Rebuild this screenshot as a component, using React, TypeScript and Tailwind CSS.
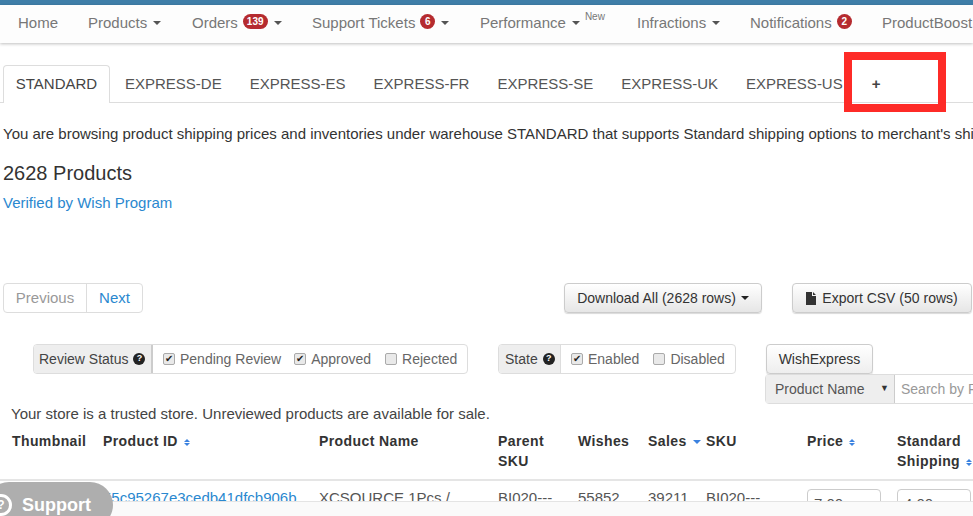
const Caret = ({ className = "ml-[6px] border-t-[#555]" }: { className?: string }) => (
  <span className={`inline-block h-0 w-0 border-x-[4px] border-t-[4px] border-x-transparent ${className}`} />
);

const Badge = ({ children }: { children: string }) => (
  <span className="ml-[5px] -mt-[4px] flex h-[15px] min-w-[15px] items-center justify-center rounded-full bg-[#b52b2f] px-[4px] text-[10px] font-bold text-white">
    {children}
  </span>
);

const Sort = () => (
  <span className="ml-[6px] inline-flex flex-col gap-[1px] align-middle">
    <span className="h-0 w-0 border-x-[3px] border-b-[3px] border-x-transparent border-b-[#3b82e0]" />
    <span className="h-0 w-0 border-x-[3px] border-t-[3px] border-x-transparent border-t-[#3b82e0]" />
  </span>
);

const Help = () => (
  <span className="ml-[5px] flex h-[12px] w-[12px] items-center justify-center rounded-full bg-[#222] text-[9px] font-bold text-white">?</span>
);

const Check = ({ label, checked, className = "" }: { label: string; checked?: boolean; className?: string }) => (
  <span className={`flex items-center ${className}`}>
    <span className="mr-[5px] flex h-[12px] w-[12px] items-center justify-center rounded-[2px] border border-[#aaa] bg-[#e9e9e9] text-[10px] leading-none text-[#222]">
      {checked ? "✔" : ""}
    </span>
    {label}
  </span>
);

const tabs = ["EXPRESS-DE", "EXPRESS-ES", "EXPRESS-FR", "EXPRESS-SE", "EXPRESS-UK", "EXPRESS-US"];

export default function App() {
  return (
    <div className="relative h-[516px] w-[973px] overflow-hidden bg-white font-['Liberation_Sans',Arial,sans-serif] text-[15px] text-[#444]">
      {/* Navbar */}
      <div className="h-[5px] bg-[#3f7ea8]" />
      <nav className="flex h-[38px] items-center overflow-hidden whitespace-nowrap bg-[#fdfdfd] pb-[2px] pl-[18px] text-[#777] shadow-[0_1px_3px_rgba(0,0,0,0.25)]">
        <span className="w-[70px]">Home</span>
        <span className="flex w-[104px] items-center">Products<Caret /></span>
        <span className="flex w-[120px] items-center">Orders<Badge>139</Badge><Caret /></span>
        <span className="flex w-[168px] items-center">Support Tickets<Badge>6</Badge><Caret /></span>
        <span className="flex w-[157px] items-center">Performance<Caret /><sup className="-mt-[3px] ml-[5px] text-[10px]">New</sup></span>
        <span className="flex w-[113px] items-center">Infractions<Caret /></span>
        <span className="flex w-[132px] items-center">Notifications<Badge>2</Badge></span>
        <span>ProductBoost</span>
      </nav>

      {/* Warehouse tabs */}
      <div className="mt-[22px] flex h-[38px] border-b border-[#ddd] pl-[3px] whitespace-nowrap">
        <span className="flex h-[38px] w-[107px] items-center justify-center rounded-t-[4px] border border-b-0 border-[#ddd] bg-white">STANDARD</span>
        <div className="flex gap-[28px] pl-[15px]">
          {tabs.map((t) => (
            <span key={t} className="flex h-[38px] items-center text-[#555]">{t}</span>
          ))}
          <span className="flex h-[38px] items-center pl-[1px] font-bold text-[#444]">+</span>
        </div>
      </div>

      <p className="mt-[21px] whitespace-nowrap pl-[3px] leading-[20px] text-[#333]">
        You are browsing product shipping prices and inventories under warehouse STANDARD that supports Standard shipping options to merchant's shipping countries
      </p>
      <h2 className="mt-[17px] pl-[3px] text-[20px] leading-[24px] text-[#333]">2628 Products</h2>
      <a className="mt-[8px] block pl-[3px] leading-[20px] text-[#2a88cf]">Verified by Wish Program</a>

      {/* Pager and exports */}
      <div className="mt-[70px] flex h-[30px] items-center whitespace-nowrap pl-[3px]">
        <div className="flex h-[30px] w-[140px] shrink-0 items-center rounded-[4px] border border-[#ddd]">
          <span className="flex h-full w-[83px] items-center justify-center border-r border-[#ddd] text-[#999]">Previous</span>
          <span className="flex flex-1 items-center justify-center text-[#2a88cf]">Next</span>
        </div>
        <button className="ml-[421px] flex h-[30px] w-[198px] shrink-0 items-center justify-center rounded-[4px] border border-[#ccc] bg-gradient-to-b from-white to-[#e6e6e6] text-[14px] text-[#333] shadow-[0_1px_1px_rgba(0,0,0,0.15)]">
          Download All (2628 rows)<Caret className="ml-[5px] border-t-[#222]" />
        </button>
        <button className="ml-[30px] flex h-[30px] w-[180px] shrink-0 items-center justify-center rounded-[4px] border border-[#ccc] bg-gradient-to-b from-white to-[#e6e6e6] text-[14px] text-[#333] shadow-[0_1px_1px_rgba(0,0,0,0.15)]">
          <svg width="11" height="13" viewBox="0 0 11 13" className="mr-[5px]"><path d="M0 0h6v4h4v9H0z M7 0l3 3H7z" fill="#333" /></svg>
          Export CSV (50 rows)
        </button>
      </div>

      {/* Filters */}
      <div className="mt-[31px] flex items-start whitespace-nowrap pl-[33px] text-[14px]">
        <div className="flex h-[30px] w-[435px] shrink-0 items-center rounded-[4px] border border-[#ddd]">
          <span className="flex h-full w-[119px] items-center rounded-l-[3px] border-r-2 border-[#ccc] bg-[#eee] pl-[5px] text-[#444]">Review Status<Help /></span>
          <Check label="Pending Review" checked className="ml-[10px] text-[#666]" />
          <Check label="Approved" checked className="ml-[13px] text-[#666]" />
          <Check label="Rejected" className="ml-[14px] text-[#666]" />
        </div>
        <div className="ml-[30px] flex h-[30px] w-[238px] shrink-0 items-center rounded-[4px] border border-[#ddd]">
          <span className="flex h-full w-[62px] items-center rounded-l-[3px] border-r border-[#ddd] bg-[#eee] pl-[6px] text-[#444]">State<Help /></span>
          <Check label="Enabled" checked className="ml-[10px] text-[#666]" />
          <Check label="Disabled" className="ml-[14px] text-[#666]" />
        </div>
        <div className="ml-[30px] flex shrink-0 flex-col items-start">
          <button className="flex h-[30px] w-[107px] items-center justify-center rounded-[4px] border border-[#ccc] bg-gradient-to-b from-white to-[#eee] text-[#333] shadow-[0_1px_1px_rgba(0,0,0,0.15)]">WishExpress</button>
          <div className="-ml-[1px] flex h-[30px] w-[300px] items-center rounded-[4px] border border-[#ddd]">
            <span className="flex h-full w-[129px] items-center justify-between border-r border-[#ccc] bg-[#eee] pl-[9px] pr-[5px] text-[#555]">Product Name<span className="text-[9px] text-[#333]">▼</span></span>
            <span className="pl-[6px] text-[#999]">Search by Product Name</span>
          </div>
        </div>
      </div>

      <p className="pl-[11px] leading-[20px] text-[#444]">Your store is a trusted store. Unreviewed products are available for sale.</p>

      {/* Product table */}
      <div className="mt-[7px] grid h-[50px] grid-cols-[91px_216px_179px_80px_70px_58px_101px_90px_1fr] border-b-2 border-[#e5e5e5] pl-[12px] text-[14px] font-bold leading-[20px] tracking-[0.4px] text-[#333]">
        <span>Thumbnail</span>
        <span className="whitespace-nowrap">Product ID<Sort /></span>
        <span>Product Name</span>
        <span>Parent<br />SKU</span>
        <span>Wishes</span>
        <span className="whitespace-nowrap">Sales<Caret className="ml-[6px] border-t-[#3b82e0] align-middle" /></span>
        <span>SKU</span>
        <span className="whitespace-nowrap">Price<Sort /></span>
        <span className="whitespace-nowrap">Standard<br />Shipping<Sort /></span>
      </div>
      <div className="grid grid-cols-[91px_216px_179px_80px_70px_58px_101px_90px_1fr] pl-[12px] pt-[7px] leading-[20px] whitespace-nowrap text-[#555]">
        <span />
        <span className="text-[#2a88cf]">55c95267e3cedb41dfcb906b</span>
        <span>XCSOURCE 1Pcs /</span>
        <span>BI020---</span>
        <span>55852</span>
        <span>39211</span>
        <span>BI020---</span>
        <span className="mt-[1px] h-[30px] w-[74px] rounded-[4px] border border-[#ccc] pl-[6px] pt-[4px]">7.00</span>
        <span className="mt-[1px] h-[30px] w-[74px] rounded-[4px] border border-[#ccc] pl-[6px] pt-[4px]">4.00</span>
      </div>

      {/* Overlays */}
      <div className="absolute bottom-0 left-0 right-0 h-[15px] border-t border-[#e4e4e4] bg-[#fafafa]" />
      <div className="absolute -bottom-[12px] -left-[14px] flex h-[46px] w-[127px] items-center rounded-t-[24px] rounded-br-[24px] bg-[#aeaeae] pl-[4px] text-[18px] font-bold text-white">
        <span className="mr-[10px] flex h-[22px] w-[22px] shrink-0 items-center justify-center rounded-full border-[3px] border-white text-[12px]">?</span>
        Support
      </div>
      <div className="absolute left-[844px] top-[52px] h-[60px] w-[102px] border-[8px] border-[#fe2b27]" />
    </div>
  );
}
